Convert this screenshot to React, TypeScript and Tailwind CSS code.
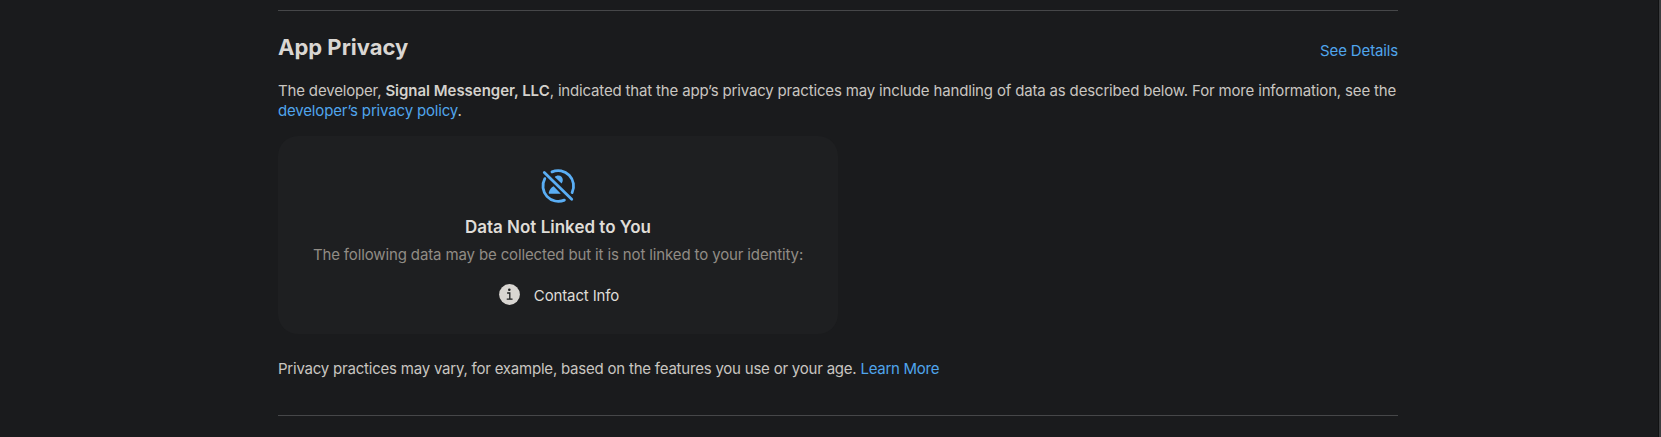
import type { ReactNode } from 'react'

function PolicyLink({ children, className = '' }: { children: ReactNode; className?: string }) {
  return (
    <a href="#" className={`text-[#50a5ec] hover:underline ${className}`}>
      {children}
    </a>
  )
}

function NotLinkedIcon() {
  return (
    <svg viewBox="0 0 36 36" className="h-9 w-9 text-[#5aaef5]" fill="none" aria-hidden="true">
      <path
        d="M12 3.9A15.4 15.4 0 0 1 32.1 24.6M24.4 32.1A15.4 15.4 0 0 1 4.8 10.6M4.3 4.5L31.7 31.3"
        stroke="currentColor"
        strokeWidth="2.8"
        strokeLinecap="round"
      />
      <path
        d="M14.7 9C15.7 8 16.9 7.5 18.3 7.5C20.9 7.5 22.8 9.5 22.8 12.1C22.8 13.4 22.4 14.6 21.6 15.6ZM13.6 18.2L20.8 25.8H9.9C9 25.8 8.6 25.2 8.8 24.4C9.5 21.6 11.2 19.4 13.6 18.2Z"
        fill="currentColor"
      />
    </svg>
  )
}

function InfoIcon() {
  return (
    <svg viewBox="0 0 21 21" className="h-[21px] w-[21px]" fill="none" aria-hidden="true">
      <circle cx="10.5" cy="10.5" r="10.4" fill="#d9d6d2" />
      <circle cx="10.3" cy="5.8" r="1.3" fill="#1d1f20" />
      <path d="M8.6 9H10.8V15M8.2 15.1H13.1" stroke="#1d1f20" strokeWidth="1.3" strokeLinecap="round" />
    </svg>
  )
}

export default function App() {
  return (
    <div className="flex h-[437px] overflow-hidden bg-[#1a1b1d] font-[Inter,sans-serif] text-[15px] leading-[21px] tracking-[-0.165px] text-[#c9c6c1]">
      <main className="flex-1 pt-[10px] pl-[278px]">
        <section className="h-[406px] w-[1120px] border-y border-[#464749]">
          <header className="flex items-end justify-between pt-[22px]">
            <h2 className="text-[22px] leading-7 font-bold tracking-normal text-[#d9d6d2]">App Privacy</h2>
            <PolicyLink className="tracking-[-0.145px]">See Details</PolicyLink>
          </header>

          <p className="mt-5 leading-5 whitespace-nowrap">
            The developer,{' '}
            <strong className="font-semibold tracking-[-0.03px] text-[#d4d1cc]">Signal Messenger, LLC</strong>, indicated
            that the app’s privacy practices may include handling of data as described below. For more information, see
            the
            <br />
            <PolicyLink>developer’s privacy policy</PolicyLink>.
          </p>

          <div className="mt-[15px] flex h-[198px] w-[560px] flex-col items-center rounded-[20px] bg-[#1e1f21] pt-8 leading-5 tracking-[-0.13px]">
            <NotLinkedIcon />
            <h3 className="mt-[11px] text-[17px] leading-6 font-semibold tracking-normal text-[#dfdcd7]">
              Data Not Linked to You
            </h3>
            <p className="mt-[6px] text-[#918c85]">
              The following data may be collected but it is not linked to your identity:
            </p>
            <div className="mt-[19px] ml-[2px] flex items-start gap-[14px] text-[#dfdcd7]">
              <InfoIcon />
              <span className="mt-[1.5px]">Contact Info</span>
            </div>
          </div>

          <p className="mt-6 tracking-[-0.215px]">
            Privacy practices may vary, for example, based on the features you use or your age.{' '}
            <PolicyLink className="tracking-[-0.28px]">Learn More</PolicyLink>
          </p>
        </section>
      </main>
      <div className="w-[3px] border-l border-[#111213] bg-[#3c3d3f]" />
    </div>
  )
}
